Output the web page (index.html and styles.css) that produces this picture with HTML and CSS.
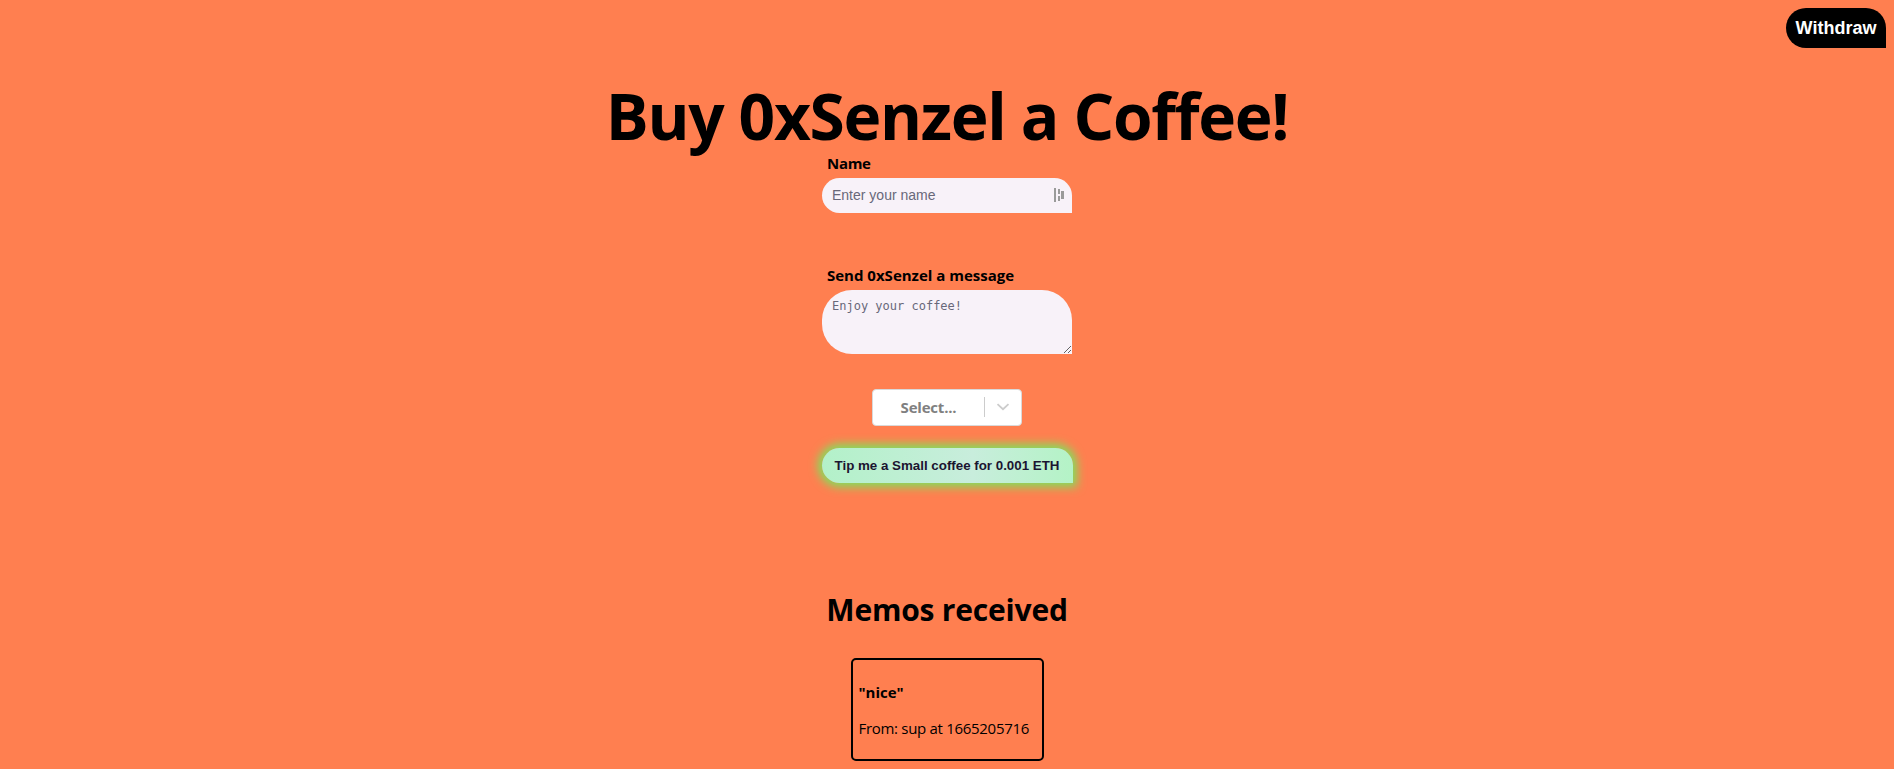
FILE: index.html
```html
<!DOCTYPE html>
<html lang="en">
<head>
<meta charset="utf-8">
<title>Buy 0xSenzel a Coffee!</title>
<link rel="stylesheet" href="styles.css">
</head>
<body>
<div class="page">
  <button class="withdraw" type="button">Withdraw</button>
  <main class="main">
    <h1 class="title">Buy 0xSenzel a Coffee!</h1>
    <form class="form">
      <div class="field">
        <label class="label" for="name">Name</label>
        <div class="input-wrap">
          <input class="input" id="name" type="text" placeholder="Enter your name">
          <svg class="pm-icon" width="12" height="14" viewBox="0 0 12 14" aria-hidden="true">
            <rect x="0" y="0" width="2" height="14" fill="#9a9a9a"/>
            <rect x="4" y="1" width="2" height="5" fill="#9a9a9a"/>
            <rect x="4" y="8" width="2" height="5" fill="#9a9a9a"/>
            <rect x="7" y="3" width="3" height="8" fill="#9a9a9a"/>
          </svg>
        </div>
      </div>
      <div class="field field-message">
        <label class="label label-wide" for="message">Send 0xSenzel a message</label>
        <textarea class="textarea" id="message" placeholder="Enjoy your coffee!"></textarea>
      </div>
      <div class="select">
        <span class="select-value">Select...</span>
        <span class="select-sep"></span>
        <svg class="select-chevron" width="20" height="20" viewBox="0 0 20 20" aria-hidden="true">
          <path d="M4.5 7.2 L10 12.2 L15.5 7.2" fill="none" stroke="#cccccc" stroke-width="1.8"/>
        </svg>
      </div>
      <button class="tip" type="button">Tip me a Small coffee for 0.001 ETH</button>
    </form>
    <h1 class="memos-title">Memos received</h1>
    <div class="memo">
      <p class="memo-msg">"nice"</p>
      <p class="memo-from">From: sup at 1665205716</p>
    </div>
  </main>
</div>
</body>
</html>
```
FILE: styles.css
```css
html, body {
  margin: 0;
  padding: 0;
}
body {
  background: #ff7f50;
  font-family: "Open Sans", "Noto Sans", sans-serif;
  color: #000;
  overflow: hidden;
}
.page {
  position: relative;
  min-height: 769px;
}
.withdraw {
  position: absolute;
  top: 8px;
  right: 8px;
  width: 100px;
  height: 40px;
  border: none;
  border-radius: 20px 20px 0 20px;
  background: #000;
  color: #fff;
  font-family: "Liberation Sans", Arial, sans-serif;
  font-weight: bold;
  font-size: 18px;
  padding: 0;
}
.main {
  display: flex;
  flex-direction: column;
  align-items: center;
  padding-top: 79px;
}
.title {
  margin: 0;
  font-size: 64px;
  line-height: 1.15;
  font-weight: 700;
  letter-spacing: -1.3px;
}
.form {
  display: flex;
  flex-direction: column;
  align-items: center;
  width: 250px;
}
.field {
  display: flex;
  flex-direction: column;
  width: 250px;
}
.field-message {
  margin-top: 52px;
}
.label {
  font-size: 15px;
  line-height: 20px;
  font-weight: 700;
  padding-left: 5px;
  letter-spacing: -0.3px;
}
.label-wide {
  letter-spacing: 0;
}
.input-wrap {
  position: relative;
  margin-top: 5px;
}
.input {
  display: block;
  box-sizing: border-box;
  width: 250px;
  height: 35px;
  border: none;
  border-radius: 30px 30px 0 30px;
  background: #f8f2f9;
  padding: 0 10px;
  font-family: "Liberation Sans", Arial, sans-serif;
  font-size: 14px;
  outline: none;
}
.input::placeholder {
  color: #68687a;
}
.pm-icon {
  position: absolute;
  right: 6px;
  top: 10px;
}
.textarea {
  display: block;
  box-sizing: border-box;
  width: 250px;
  height: 64px;
  margin-top: 5px;
  border: none;
  border-radius: 30px 30px 0 30px;
  background: #f8f2f9;
  padding: 9px 10px;
  font-family: "DejaVu Sans Mono", "Liberation Mono", monospace;
  font-size: 12px;
  outline: none;
}
.textarea::placeholder {
  color: #68687a;
}
.select {
  margin-top: 35px;
  box-sizing: border-box;
  width: 150px;
  height: 37px;
  display: flex;
  align-items: center;
  background: #fff;
  border: 1px solid #d9d9d9;
  border-radius: 4px;
}
.select-value {
  flex: 1;
  text-align: center;
  font-size: 15px;
  font-weight: 700;
  color: #808080;
  letter-spacing: -0.2px;
}
.select-sep {
  width: 1px;
  height: 20px;
  background: #cccccc;
}
.select-chevron {
  margin: 0 8px;
}
.tip {
  margin-top: 22px;
  box-sizing: border-box;
  width: 251px;
  height: 35px;
  border: none;
  border-radius: 20px 20px 0 20px;
  background: linear-gradient(90deg, #b3f1c9 0%, #c8eddc 60%, #b4f3c6 100%);
  box-shadow: 0 0 10px 4px #7ee35c;
  color: #1b1530;
  font-family: "Liberation Sans", Arial, sans-serif;
  font-weight: 700;
  font-size: 13.33px;
  padding: 0;
}
.memos-title {
  margin: 109px 0 0;
  font-size: 30px;
  line-height: 35px;
  font-weight: 700;
  letter-spacing: -0.2px;
}
.memo {
  margin-top: 31px;
  box-sizing: border-box;
  width: 193px;
  border: 2px solid #000;
  border-radius: 5px;
  padding: 6px 6px 5px;
}
.memo p {
  margin: 16px 0;
  font-size: 15px;
  line-height: 20px;
  white-space: nowrap;
}
.memo-msg {
  font-weight: 700;
}
.memo-from {
  letter-spacing: -0.3px;
}
```
